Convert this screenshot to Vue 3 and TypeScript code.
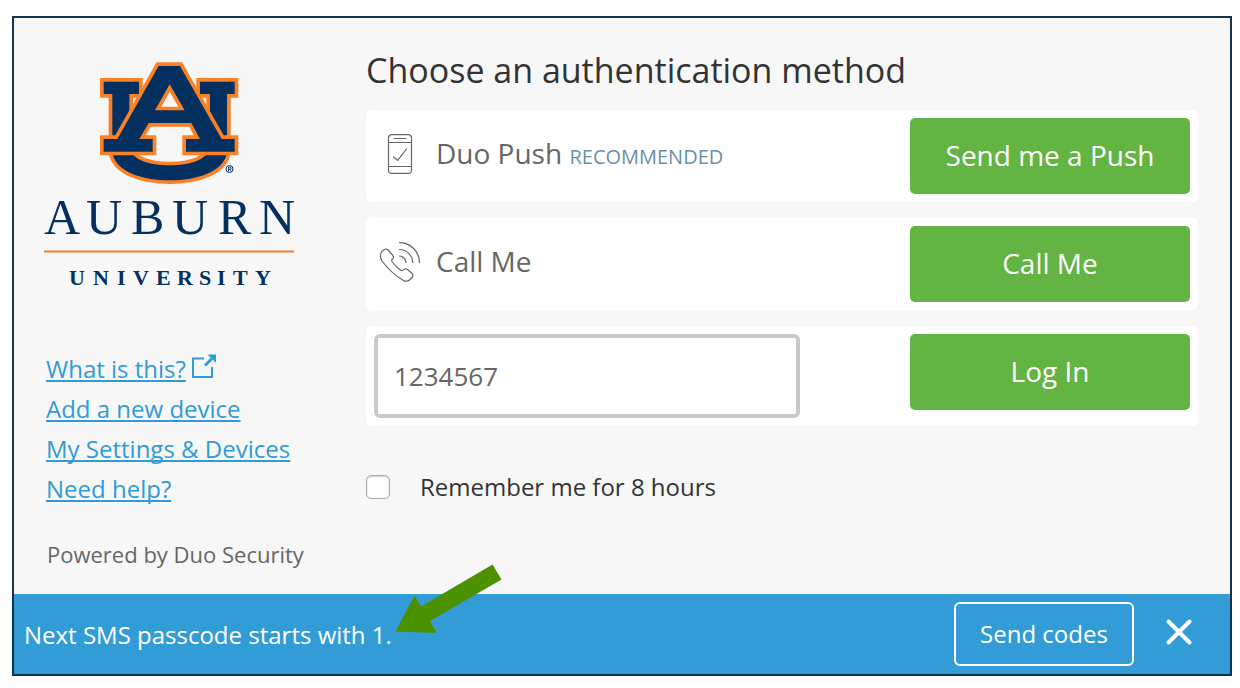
<script setup lang="ts">
import { ref } from 'vue'

interface SideLink {
  label: string
  external?: boolean
}

const links: SideLink[] = [
  { label: 'What is this?', external: true },
  { label: 'Add a new device' },
  { label: 'My Settings & Devices' },
  { label: 'Need help?' },
]

const passcode = ref('1234567')
const remember = ref(false)
</script>

<template>
  <div class="frame">
    <div class="content">
      <aside class="sidebar">
        <svg class="logo" viewBox="42 60 256 230" role="img" aria-label="Auburn University">
          <g transform="translate(90 55) scale(0.3333)" class="mark">
            <path d="M41 80H147V117H118V270C118 315 180 331 239 331C298 331 360 315 360 270V117H330V80H434V117H411V290C405 350 320 376 239 376C158 376 73 350 67 290V117H41Z" />
            <path fill-rule="evenodd" d="M206 33H270L395 252H434V290H288V252H330L304 204H176L148 252H188V290H41V252H82ZM239 88L195 166H284Z" />
          </g>
          <circle cx="229.500" cy="169" r="3.500" fill="none" stroke="#0a2f5f" />
          <path d="M228.500 171.500v-4.500h1.500a1 1 0 0 1 0 2.400h-1.500M230 169.400l1.200 2" fill="none" stroke="#0a2f5f" stroke-width="0.900" />
          <text class="name" x="44 86 131 172 218 259" y="234">AUBURN</text>
          <path d="M44 251.500H294" stroke="#f58025" stroke-width="2" />
          <text class="sub" x="69 93 117 133 156 177 199 217 233 255" y="285">UNIVERSITY</text>
        </svg>
        <nav class="links">
          <div v-for="link in links" :key="link.label" class="link-row">
            <a href="#">{{ link.label }}</a>
            <svg v-if="link.external" class="external" viewBox="0 0 26 26" aria-hidden="true">
              <path d="M13 4.500H2V23H21V13" fill="none" stroke="#2f9bd8" stroke-width="2" />
              <path d="M14 11.500L21 4.500" stroke="#2f9bd8" stroke-width="3" />
              <path d="M16.500 0.500H25V9Z" fill="#2f9bd8" />
            </svg>
          </div>
        </nav>
        <p class="powered">Powered by Duo Security</p>
      </aside>

      <main class="main">
        <h1>Choose an authentication method</h1>
        <section class="row">
          <div class="method">
            <svg class="icon" viewBox="0 0 40 40" aria-hidden="true">
              <rect x="8.500" y="0.600" width="23" height="38.800" rx="3.500" />
              <path d="M8.500 8.500h23M8.500 32.500h23M14 4.500h12M13.500 23l4.200 3.300L26.500 15" />
            </svg>
            <span class="title">Duo Push <small>RECOMMENDED</small></span>
          </div>
          <button type="button" class="primary">Send me a Push</button>
        </section>
        <section class="row">
          <div class="method">
            <svg class="icon" viewBox="0 0 40 40" aria-hidden="true">
              <path d="M2 9L4.500 7.500Q6.500 6.500 8.500 8.500L12.500 13Q14 15 13 16.500Q11 18 12 19.500Q16 25 21 28.500Q22.500 29 24 27.300Q25.500 26.300 27.500 27.500L31.800 31.300Q33.800 33.500 32 35.500L29.500 38Q27.500 40 23.500 38.600Q11 31 2 19Q-1 14 2 9Z" />
              <path d="M19.500 0.700A20 20 0 0 1 39.500 20.500M19.500 7.500A13.300 13.300 0 0 1 32.700 20.500M19.500 14A6.700 6.700 0 0 1 26 20.500" />
            </svg>
            <span class="title">Call Me</span>
          </div>
          <button type="button" class="primary">Call Me</button>
        </section>
        <section class="row">
          <input v-model="passcode" class="passcode" type="text" aria-label="Passcode" />
          <button type="button" class="primary">Log In</button>
        </section>
        <label class="remember">
          <input v-model="remember" type="checkbox" />
          <span>Remember me for 8 hours</span>
        </label>
      </main>
    </div>

    <footer class="bar">
      <p class="message">
        Next SMS passcode starts with 1.
        <svg class="arrow" viewBox="0 0 108 70" aria-hidden="true">
          <path d="M0.500 67.500L19.500 31.500L26 42.500L97.500 0.500L106.500 15.500L35 57L41.500 69Z" fill="#4c9100" />
        </svg>
      </p>
      <button type="button" class="codes">Send codes</button>
      <button type="button" class="close" aria-label="Close">
        <svg viewBox="0 0 26 26" aria-hidden="true">
          <path d="M2.500 2.500L23.500 23.500M23.500 2.500L2.500 23.500" stroke="#fff" stroke-width="4" stroke-linecap="round" />
        </svg>
      </button>
    </footer>
  </div>
</template>

<style>
body {
  margin: 0;
  background: #fff;
}
</style>

<style scoped>
.frame {
  box-sizing: border-box;
  margin: 16px 8px 12px 12px;
  border: 2px solid #12344f;
  background: #f7f7f7;
  font-family: "Open Sans", "Noto Sans", sans-serif;
  color: #333;
}

.content {
  display: grid;
  grid-template-columns: 288px minmax(0, 1fr);
  column-gap: 32px;
  padding: 32px 32px 24px;
}

.sidebar {
  padding-top: 10px;
}

.logo {
  display: block;
  width: 256px;
  height: 230px;
  margin-left: -4px;
}

.mark {
  fill: #03305f;
  stroke: #fa8128;
  stroke-width: 22;
  paint-order: stroke;
}

.name,
.sub {
  font-family: "Liberation Serif", serif;
  fill: #03305f;
}

.name {
  font-size: 50px;
}

.sub {
  font-size: 22px;
  font-weight: 700;
}

.links {
  margin-top: 59px;
}

.link-row {
  display: flex;
  align-items: center;
  gap: 5px;
  height: 40px;
  font-size: 24px;
  line-height: 40px;
}

.link-row a {
  color: #2f9bd8;
  text-decoration: underline;
  text-decoration-thickness: 2px;
  text-decoration-skip-ink: none;
  text-underline-offset: 2px;
}

.external {
  width: 26px;
  height: 26px;
  margin-bottom: 4px;
}

.powered {
  margin: 29px 0 0 1px;
  font-size: 22px;
  line-height: 32px;
  color: #666;
}

.main {
  display: flex;
  flex-direction: column;
  gap: 16px;
}

h1 {
  margin: 0 0 4px;
  font-size: 34px;
  font-weight: 400;
  line-height: 40px;
  color: #333;
}

.row {
  display: flex;
  justify-content: space-between;
  align-items: flex-start;
  padding: 8px;
  border-radius: 5px;
  background: #fff;
}

.method {
  display: flex;
  align-items: center;
  gap: 16px;
  height: 72px;
  padding-left: 6px;
}

.icon {
  width: 40px;
  height: 40px;
  overflow: visible;
  fill: none;
  stroke: #666;
  stroke-width: 1.2;
  stroke-linecap: round;
  stroke-linejoin: round;
}

.title {
  padding-bottom: 2px;
  font-size: 28px;
  color: #666;
}

.title small {
  font-size: 20px;
  color: #6a8fa8;
}

.primary {
  width: 280px;
  height: 76px;
  padding: 0 0 2px;
  border: 0;
  border-radius: 5px;
  background: #63b442;
  color: #fff;
  font: 500 28px "Open Sans", sans-serif;
}

.passcode {
  box-sizing: border-box;
  width: 426px;
  height: 84px;
  padding: 0 16px;
  border: 4px solid #c9c9c9;
  border-radius: 6px;
  background: #fff;
  color: #666;
  font: 400 26px "Open Sans", sans-serif;
}

.remember {
  display: flex;
  align-items: center;
  align-self: flex-start;
  gap: 30px;
  margin-top: 28px;
  font-size: 24px;
  line-height: 34px;
}

.remember input {
  appearance: none;
  width: 24px;
  height: 24px;
  margin: 0;
  border: 1px solid #aaa;
  border-radius: 5px;
  background: #fff;
  box-shadow: inset 0 1px 2px #ccc;
}

.bar {
  display: flex;
  align-items: center;
  height: 80px;
  padding: 0 34px 0 10px;
  background: #329cd7;
  color: #fff;
}

.message {
  position: relative;
  margin: 0 auto 0 0;
  font-size: 24px;
  font-weight: 500;
}

.arrow {
  position: absolute;
  left: calc(100% + 3px);
  bottom: 17px;
  width: 108px;
  height: 70px;
}

.codes {
  width: 180px;
  height: 64px;
  padding: 0 0 2px;
  border: 2px solid #fff;
  border-radius: 6px;
  background: transparent;
  color: #fff;
  font: 500 24px "Open Sans", sans-serif;
}

.close {
  display: flex;
  margin-left: 28px;
  padding: 4px 4px 8px;
  border: 0;
  background: transparent;
}

.close svg {
  width: 26px;
  height: 26px;
}
</style>
